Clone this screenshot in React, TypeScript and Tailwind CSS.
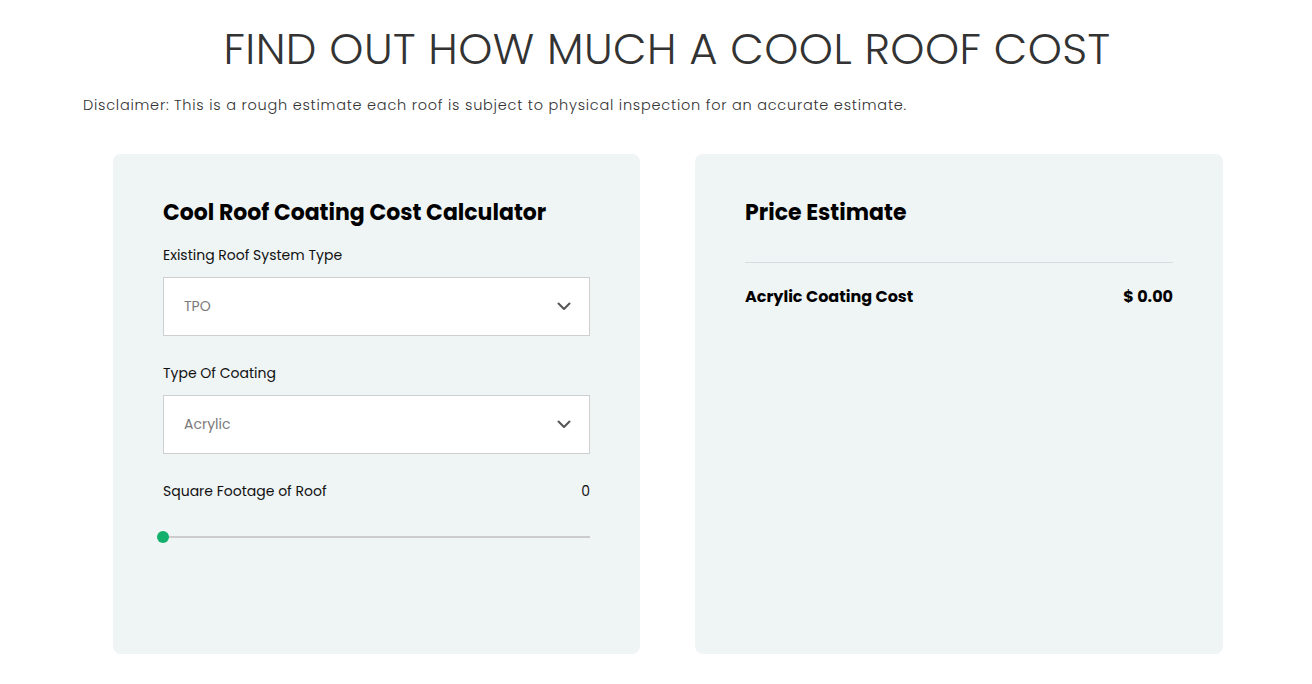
import React, { useState } from 'react'

const font = { fontFamily: 'Poppins, Inter, "Noto Sans", sans-serif' }

function Chevron() {
  return (
    <svg width="14" height="9" viewBox="0 0 14 9" fill="none" className="shrink-0">
      <path d="M1.5 1.5 7 7l5.5-5.5" stroke="#555" strokeWidth="2" strokeLinecap="round" strokeLinejoin="round" />
    </svg>
  )
}

function SelectBox({ label, value }: { label: string; value: string }) {
  return (
    <div className="flex flex-col">
      <span className="text-[14px] leading-5 text-[#111]">{label}</span>
      <div className="mt-[12px] flex h-[59px] items-center justify-between border border-[#cfcfcf] bg-white pl-[20px] pr-[18px]">
        <span className="text-[14px] text-[#7a7a7a]">{value}</span>
        <Chevron />
      </div>
    </div>
  )
}

export default function App() {
  const [sqft] = useState(0)

  return (
    <div className="min-h-[684px] bg-white text-[#333]" style={font}>
      <h1 className="pt-[24px] pl-[22px] text-center text-[43.4px] font-light leading-[50px] tracking-[0.01em] text-[#333]">
        FIND OUT HOW MUCH A COOL ROOF COST
      </h1>
      <p className="mt-[21px] pl-[83px] text-[14.5px] font-light leading-5 tracking-[0.052em] text-[#333]">
        Disclaimer: This is a rough estimate each roof is subject to physical inspection for an accurate estimate.
      </p>

      <div className="mt-[39px] flex gap-[55px] pl-[113px]">
        <section className="flex h-[500px] w-[527px] flex-col rounded-[8px] bg-[#eff4f4] px-[50px] pt-[45px]">
          <h2 className="text-[22px] font-bold leading-7 text-black">Cool Roof Coating Cost Calculator</h2>
          <div className="mt-[18px]">
            <SelectBox label="Existing Roof System Type" value="TPO" />
          </div>
          <div className="mt-[27px]">
            <SelectBox label="Type Of Coating" value="Acrylic" />
          </div>
          <div className="mt-[27px] flex items-center justify-between text-[14px] leading-5 text-[#111]">
            <span>Square Footage of Roof</span>
            <span>{sqft}</span>
          </div>
          <div className="relative mt-[30px] flex h-[12px] items-center">
            <div className="h-[2px] w-full bg-[#cccccc]" />
            <div className="absolute left-[-6px] h-[12px] w-[12px] rounded-full bg-[#12b06a]" />
          </div>
        </section>

        <section className="flex h-[500px] w-[528px] flex-col rounded-[8px] bg-[#eff4f4] px-[50px] pt-[45px]">
          <h2 className="text-[22px] font-bold leading-7 text-black">Price Estimate</h2>
          <div className="mt-[35px] h-px w-full bg-[#d9dcdf]" />
          <div className="mt-[24px] flex items-center justify-between text-[16px] font-bold leading-5 text-black">
            <span>Acrylic Coating Cost</span>
            <span>$ 0.00</span>
          </div>
        </section>
      </div>
    </div>
  )
}
